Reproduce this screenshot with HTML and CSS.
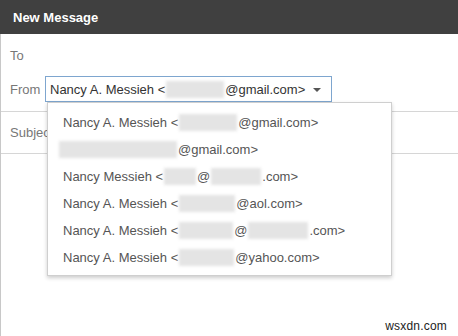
FILE: index.html
```html
<!DOCTYPE html>
<html>
<head>
<meta charset="utf-8">
<link rel="stylesheet" href="styles.css">
</head>
<body>
<div class="compose">
  <div class="header">New Message</div>
  <div class="body">
    <div class="row row-to"><span class="label">To</span></div>
    <div class="row row-from">
      <span class="label">From</span>
      <div class="select">
        <span class="sel-text">Nancy A. Messieh &lt;<span class="blur" style="width:58px"></span>@gmail.com&gt;</span>
        <svg class="arrow" width="8" height="4" viewBox="0 0 8 4"><path d="M0 0h8L4 4z" fill="#555"/></svg>
        <div class="menu">
          <div class="item">Nancy A. Messieh &lt;<span class="blur" style="width:58px"></span>@gmail.com&gt;</div>
          <div class="item item-shift"><span class="blur" style="width:118px"></span>@gmail.com&gt;</div>
          <div class="item">Nancy Messieh &lt;<span class="blur" style="width:32px"></span>@<span class="blur" style="width:50px"></span>.com&gt;</div>
          <div class="item">Nancy A. Messieh &lt;<span class="blur" style="width:56px"></span>@aol.com&gt;</div>
          <div class="item">Nancy A. Messieh &lt;<span class="blur" style="width:54px"></span>@<span class="blur" style="width:60px"></span>.com&gt;</div>
          <div class="item">Nancy A. Messieh &lt;<span class="blur" style="width:55px"></span>@yahoo.com&gt;</div>
        </div>
      </div>
    </div>
    <div class="row row-subject"><span class="label">Subject</span></div>
    <div class="content"></div>
  </div>
  <div class="watermark">wsxdn.com</div>
</div>
</body>
</html>
```
FILE: styles.css
```css
html, body {
  margin: 0;
  padding: 0;
  background: #fff;
}
body {
  width: 458px;
  height: 336px;
  overflow: hidden;
  font-family: "Liberation Sans", Arial, sans-serif;
  font-size: 13px;
}
.compose {
  position: relative;
  height: 336px;
  display: flex;
  flex-direction: column;
}
.header {
  height: 34px;
  background: #404040;
  color: #fff;
  font-weight: bold;
  font-size: 13px;
  padding-left: 13px;
  display: flex;
  align-items: center;
  box-sizing: border-box;
}
.body {
  flex: 1;
  border-left: 1px solid #c8c8c8;
  display: flex;
  flex-direction: column;
}
.row {
  display: flex;
  align-items: center;
}
.label {
  color: #777;
  padding-left: 9px;
  width: 35px;
  flex: none;
}
.row-to {
  height: 42px;
}
.row-from {
  padding-bottom: 9px;
  border-bottom: 1px solid #d6d6d6;
}
.select {
  position: relative;
  box-sizing: border-box;
  width: 287px;
  height: 26px;
  border: 1px solid #7ea6cf;
  display: flex;
  align-items: center;
  padding-left: 4px;
  color: #333;
  white-space: nowrap;
}
.sel-text {
  display: flex;
  align-items: center;
}
.arrow {
  margin-left: 8px;
  margin-top: 1px;
}
.blur {
  display: inline-block;
  height: 17px;
  background: #e4e4e4;
  filter: blur(1.5px);
  margin: 0 1px;
}
.menu {
  position: absolute;
  left: 1px;
  top: calc(100% + 1px);
  width: 345px;
  box-sizing: border-box;
  background: #fff;
  border: 1px solid #cfcfcf;
  box-shadow: 0 2px 4px rgba(0, 0, 0, 0.2);
  padding: 6px 0 4px;
  z-index: 2;
}
.item {
  height: 27px;
  display: flex;
  align-items: center;
  padding-left: 15px;
  color: #555;
  white-space: nowrap;
}
.item-shift {
  padding-left: 10px;
}
.row-subject {
  height: 41px;
  border-bottom: 1px solid #d6d6d6;
}
.content {
  flex: 1;
}
.watermark {
  position: absolute;
  right: 11px;
  bottom: 3px;
  font-size: 12px;
  color: #222;
  letter-spacing: 0.2px;
}
```
